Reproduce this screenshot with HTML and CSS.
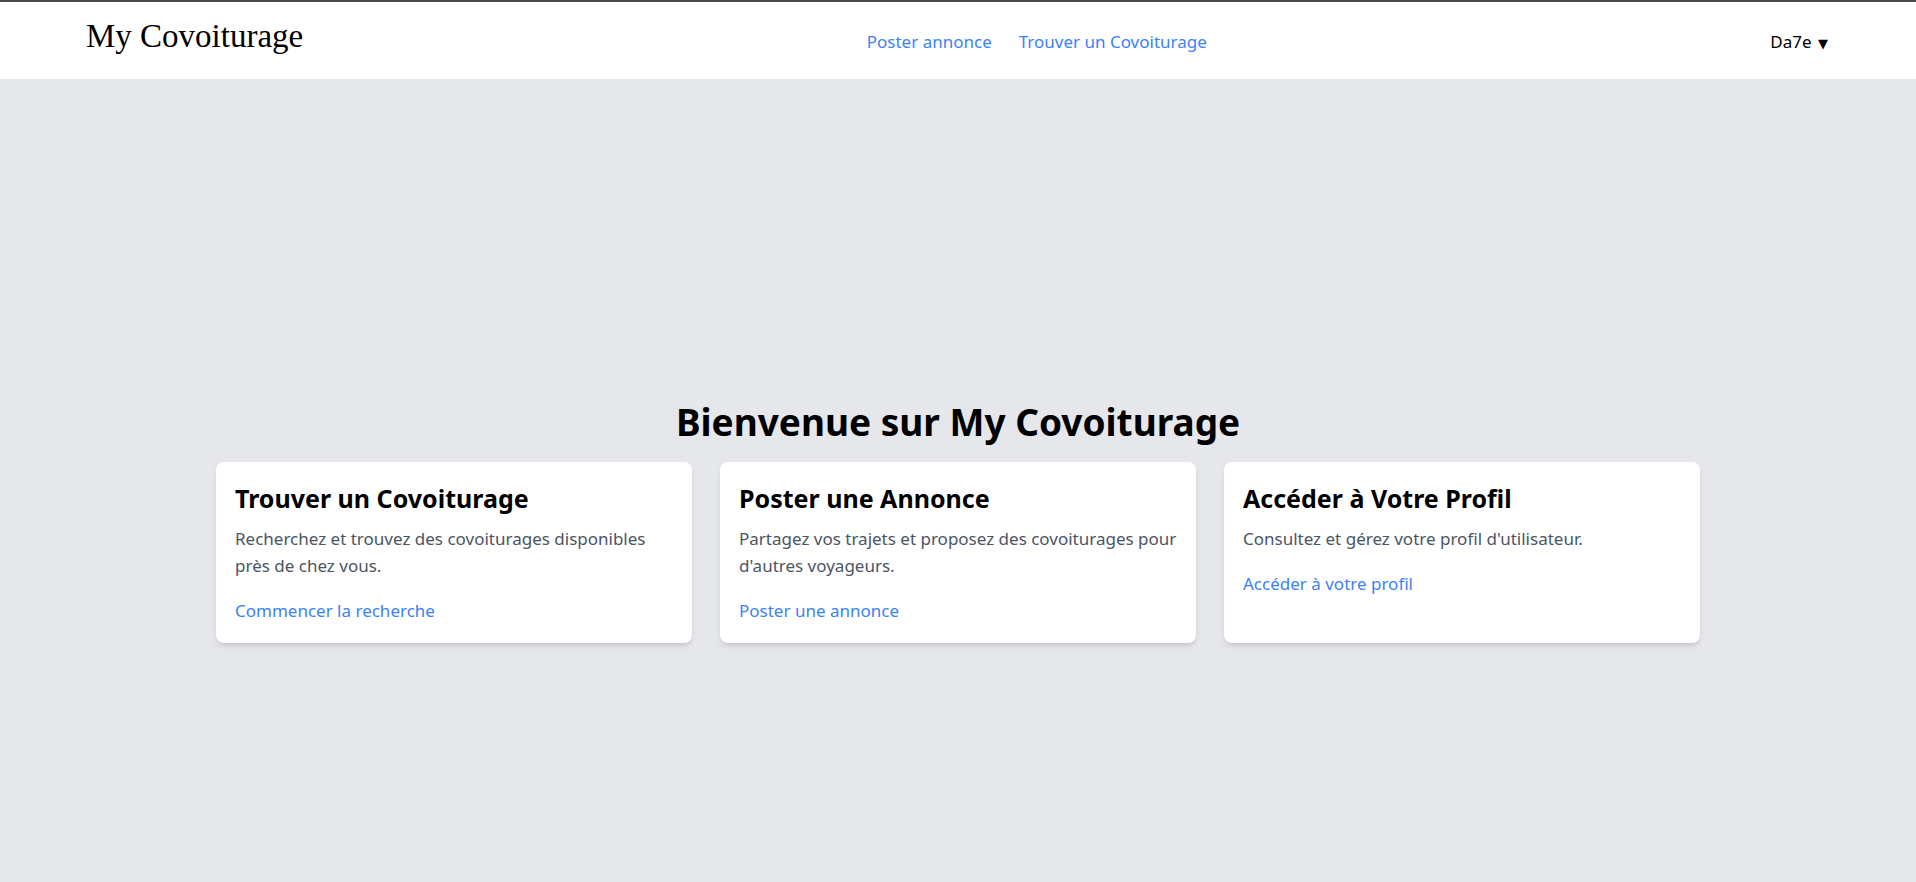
FILE: index.html
```html
<!DOCTYPE html>
<html lang="fr">
<head>
<meta charset="utf-8">
<title>My Covoiturage</title>
<link rel="stylesheet" href="styles.css">
</head>
<body>
<header class="topbar">
  <div class="brand">My Covoiturage</div>
  <nav class="nav">
    <a href="#" class="nav-link">Poster annonce</a>
    <a href="#" class="nav-link">Trouver un Covoiturage</a>
  </nav>
  <div class="user">Da7e <span class="caret">▼</span></div>
</header>
<main class="main">
  <div class="content">
    <h1 class="welcome">Bienvenue sur My Covoiturage</h1>
    <div class="cards">
      <div class="card">
        <h2 class="card-title">Trouver un Covoiturage</h2>
        <p class="card-text">Recherchez et trouvez des covoiturages disponibles près de chez vous.</p>
        <a href="#" class="card-link">Commencer la recherche</a>
      </div>
      <div class="card">
        <h2 class="card-title">Poster une Annonce</h2>
        <p class="card-text">Partagez vos trajets et proposez des covoiturages pour d'autres voyageurs.</p>
        <a href="#" class="card-link">Poster une annonce</a>
      </div>
      <div class="card">
        <h2 class="card-title">Accéder à Votre Profil</h2>
        <p class="card-text">Consultez et gérez votre profil d'utilisateur.</p>
        <a href="#" class="card-link">Accéder à votre profil</a>
      </div>
    </div>
  </div>
</main>
</body>
</html>
```

FILE: styles.css
```css
* { box-sizing: border-box; }
html, body { margin: 0; padding: 0; }
body {
  font-family: "Noto Sans", sans-serif;
  background: #e5e7eb;
  color: #000;
  border-top: 2px solid #4a4a4a;
}
.topbar {
  background: #fff;
  height: 77px;
  display: flex;
  align-items: center;
  justify-content: space-between;
  padding: 0 88px 0 86px;
}
.brand {
  font-family: "Liberation Serif", serif;
  font-size: 33px;
  line-height: 1;
  margin-top: -8px;
}
.nav {
  display: flex;
  gap: 27px;
  padding-top: 2px;
}
.nav-link {
  color: #3b82f6;
  text-decoration: none;
  font-size: 17px;
}
.user {
  font-size: 17px;
  padding-top: 2px;
}
.caret {
  font-size: 13px;
  font-family: "DejaVu Sans", sans-serif;
  margin-left: 2px;
}
.main {
  height: 882px;
  display: flex;
  align-items: center;
  justify-content: center;
}
.content {
  width: 1484px;
}
.welcome {
  margin: 0 0 16px;
  text-align: center;
  font-size: 37px;
  line-height: 48px;
  font-weight: 700;
}
.cards {
  display: grid;
  grid-template-columns: repeat(3, 1fr);
  gap: 28px;
}
.card {
  background: #fff;
  border-radius: 8px;
  box-shadow: 0 4px 6px -1px rgba(0,0,0,0.1), 0 2px 4px -2px rgba(0,0,0,0.1);
  padding: 20px 19px 22px;
  height: 181px;
}
.card-title {
  margin: 0 0 11px;
  font-size: 25px;
  line-height: 32px;
  font-weight: 700;
}
.card-text {
  margin: 0 0 18px;
  font-size: 17px;
  line-height: 27px;
  color: #4b5563;
}
.card-link {
  color: #3b82f6;
  text-decoration: none;
  font-size: 17px;
  line-height: 27px;
}
```
